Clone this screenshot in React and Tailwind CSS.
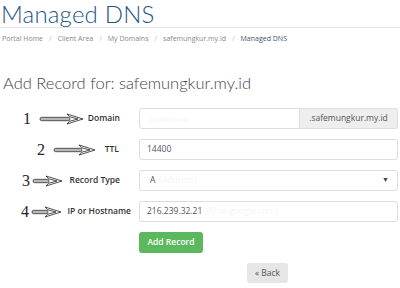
import React from 'react';

const head = { fontFamily: 'Lato, "Open Sans", sans-serif' };
const body = { fontFamily: '"Open Sans", "Liberation Sans", sans-serif' };
const serif = { fontFamily: '"Liberation Serif", "DejaVu Serif", serif' };

function Arrow({ w }) {
  return (
    <svg width={w} height="12" viewBox={`0 0 ${w} 12`} className="block">
      <rect x="1" y="4.3" width={w - 15} height="3.4" rx="1.7" fill="#b8b8b8" stroke="#333" strokeWidth="0.8" />
      <polygon
        points={`${w - 17},1 ${w - 1},6 ${w - 17},11 ${w - 14.5},8.3 ${w - 6},6 ${w - 14.5},3.7`}
        fill="#fff"
        stroke="#222"
        strokeWidth="0.8"
        strokeLinejoin="round"
      />
    </svg>
  );
}

const rows = [
  { n: '1', numLeft: 'ml-[23px]', gap: 'ml-[8px]', w: 45, label: 'Domain', mr: 'mr-[19px]' },
  { n: '2', numLeft: 'ml-[37px]', gap: 'ml-[8px]', w: 43, label: 'TTL', mr: 'mr-[20px]' },
  { n: '3', numLeft: 'ml-[22px]', gap: 'ml-[2px]', w: 31, label: 'Record Type', mr: 'mr-[19px]' },
  { n: '4', numLeft: 'ml-[21px]', gap: 'ml-[2px]', w: 31, label: 'IP or Hostname', mr: 'mr-[8px]' },
];

function Field({ i }) {
  if (i === 0) {
    return (
      <div className="flex flex-1 h-[21px]">
        <div className="flex-1 border border-[#ddd] rounded-l-[3px] bg-white px-2 flex items-center text-[8px] text-[#f5f5f5]">subdomain</div>
        <div className="w-[98px] border border-l-0 border-[#ddd] rounded-r-[3px] bg-[#eee] flex items-center justify-center text-[8.5px] text-[#555]">.safemungkur.my.id</div>
      </div>
    );
  }
  if (i === 1) {
    return (
      <div className="flex-1 h-[21px] border border-[#ddd] rounded-[3px] bg-white px-[7px] flex items-center text-[8.5px] text-[#555]">14400</div>
    );
  }
  if (i === 2) {
    return (
      <div className="flex-1 h-[21px] border border-[#ddd] rounded-[3px] bg-white pl-[10px] pr-[8px] flex items-center text-[8.5px] text-[#555]">
        <span>A</span>
        <span className="ml-1 text-[#f5f5f5]">(Address)</span>
        <span className="ml-auto text-[7px] text-[#444]">▼</span>
      </div>
    );
  }
  return (
    <div className="flex-1 h-[21px] border border-[#ddd] rounded-[3px] bg-white px-[7px] flex items-center text-[8.5px] text-[#555]">
      <span>216.239.32.21</span>
      <span className="ml-1 text-[#f5f5f5]">(IP or google.com)</span>
    </div>
  );
}

export default function App() {
  return (
    <div className="w-[400px] h-[288px] bg-white overflow-hidden relative" style={body}>
      <h1 className="text-[24px] leading-[27px] text-[#1d5586] font-light pl-[1px] tracking-[0.2px]" style={head}>
        Managed DNS
      </h1>
      <div className="h-px bg-[#e6e6e6]" />
      <div className="flex items-center mt-[6px] pl-[2px] text-[7px] text-[#888] h-[10px]">
        <span>Portal Home</span>
        <span className="mx-[6px] text-[#bbb]">/</span>
        <span>Client Area</span>
        <span className="mx-[6px] text-[#bbb]">/</span>
        <span>My Domains</span>
        <span className="mx-[6px] text-[#bbb]">/</span>
        <span>safemungkur.my.id</span>
        <span className="mx-[6px] text-[#bbb]">/</span>
        <span className="text-[#41556b]">Managed DNS</span>
      </div>
      <h2 className="mt-[29px] pl-[3px] text-[16.5px] leading-[20px] font-light text-[#444]" style={head}>
        Add Record for: safemungkur.my.id
      </h2>
      <div className="mt-[15px] flex flex-col gap-[10px] pr-[2px]">
        {rows.map((r, i) => (
          <div key={r.n} className="flex items-center">
            <div className="w-[139px] flex items-center shrink-0">
              <span className={`${r.numLeft} text-[16px] leading-[16px] text-[#222]`} style={serif}>{r.n}</span>
              <span className={r.gap}>
                <Arrow w={r.w} />
              </span>
              <span className={`ml-auto ${r.mr} text-[8.5px] font-semibold text-[#333] whitespace-nowrap`}>{r.label}</span>
            </div>
            <Field i={i} />
          </div>
        ))}
      </div>
      <div className="mt-[10px] pl-[139px] flex">
        <button className="h-[21px] w-[64px] rounded-[3px] bg-[#5cb85c] text-white text-[8.5px] font-semibold">Add Record</button>
      </div>
      <div className="mt-[10px] pl-[247px] flex">
        <button className="h-[20px] w-[41px] rounded-[3px] bg-[#e6e6e6] text-[#555] text-[8.5px]">« Back</button>
      </div>
    </div>
  );
}
